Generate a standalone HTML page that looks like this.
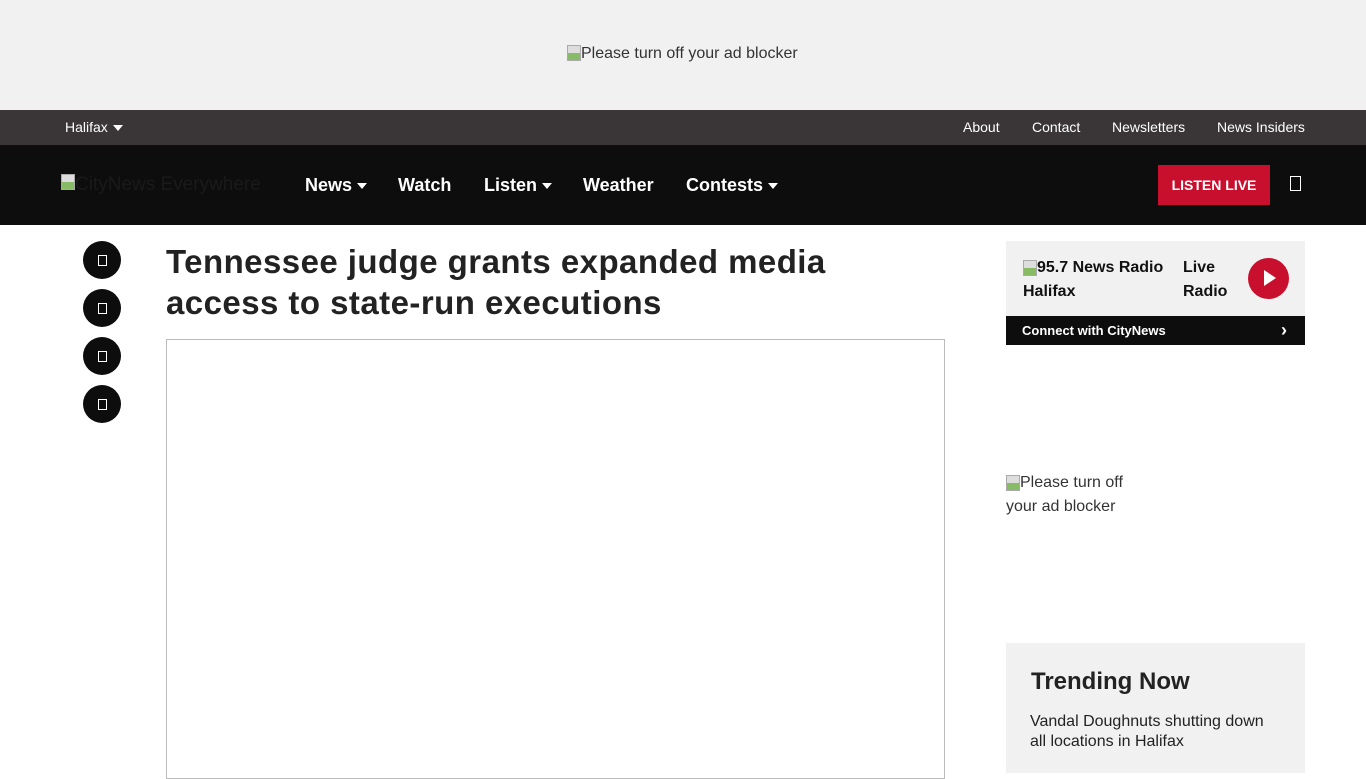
<!DOCTYPE html>
<html><head><meta charset="utf-8"><style>
*{margin:0;padding:0;box-sizing:border-box}
body{width:1366px;height:768px;overflow:hidden;background:#fff;font-family:"Liberation Sans",Arial,sans-serif;color:#222;position:relative}
.a{position:absolute}
.tri{display:inline-block;width:0;height:0;border-left:5px solid transparent;border-right:5px solid transparent;border-top:6px solid #fff;vertical-align:middle;margin-left:5px}
.nav span{position:absolute;top:175px;color:#fff;font-weight:bold;font-size:18px}
.c{position:absolute;left:83px;width:38px;height:38px;border-radius:50%;background:#0d0d0d}
.c:after{content:"";position:absolute;left:15px;top:14px;width:7px;height:9px;border:1px solid #fff}
.bi{display:inline-block;width:14px;height:16px;background:linear-gradient(#ddd 50%,#8b6 50%);vertical-align:top;border:1px solid #aaa}
</style></head><body>
<div class="a" style="left:0;top:0;width:1366px;height:110px;background:#f1f1f1"></div>
<div class="a" style="left:567px;top:45px;font-size:16px;color:#333"><span class="bi"></span>Please turn off your ad blocker</div>
<div class="a" style="left:0;top:110px;width:1366px;height:35px;background:#3a3637"></div>
<div class="a" style="left:65px;top:119px;color:#fff;font-size:14px">Halifax<span class="tri"></span></div>
<div class="a" style="left:963px;top:119px;color:#fff;font-size:14px">About</div>
<div class="a" style="left:1032px;top:119px;color:#fff;font-size:14px">Contact</div>
<div class="a" style="left:1112px;top:119px;color:#fff;font-size:14px">Newsletters</div>
<div class="a" style="left:1217px;top:119px;color:#fff;font-size:14px">News Insiders</div>
<div class="a" style="left:0;top:145px;width:1366px;height:80px;background:#0d0d0d"></div>
<div class="a" style="left:61px;top:174px;font-size:19px;color:#1a1a1a"><span class="bi"></span>CityNews Everywhere</div>
<div class="nav">
<span style="left:305px">News<i class="tri"></i></span>
<span style="left:398px">Watch</span>
<span style="left:484px">Listen<i class="tri"></i></span>
<span style="left:583px">Weather</span>
<span style="left:686px">Contests<i class="tri"></i></span>
</div>
<div class="a" style="left:1158px;top:165px;width:112px;height:40px;background:#c8102e;color:#fff;font-weight:bold;font-size:14px;text-align:center;line-height:40px">LISTEN LIVE</div>
<div class="a" style="left:1290px;top:176px;width:11px;height:15px;border:1px solid #fff"></div>
<div class="c" style="top:241px"></div><div class="c" style="top:289px"></div><div class="c" style="top:337px"></div><div class="c" style="top:385px"></div>
<div class="a" style="left:166px;top:241px;width:760px;font-size:33px;letter-spacing:0.45px;font-weight:bold;line-height:41px;color:#222">Tennessee judge grants expanded media access to state-run executions</div>
<div class="a" style="left:166px;top:339px;width:779px;height:440px;border:1px solid #bbb"></div>
<div class="a" style="left:1006px;top:241px;width:299px;height:75px;background:#f1f1f1"></div>
<div class="a" style="left:1023px;top:256px;font-size:16px;font-weight:bold;line-height:24px;color:#111;width:155px"><span class="bi" style="margin-top:4px"></span>95.7 News Radio Halifax</div>
<div class="a" style="left:1183px;top:256px;font-size:16px;font-weight:bold;line-height:24px;color:#111">Live<br>Radio</div>
<div class="a" style="left:1248px;top:258px;width:41px;height:41px;border-radius:50%;background:#c8102e"><div style="position:absolute;left:16px;top:12px;border-left:12px solid #fff;border-top:8px solid transparent;border-bottom:8px solid transparent"></div></div>
<div class="a" style="left:1006px;top:316px;width:299px;height:29px;background:#0d0d0d;color:#fff;font-weight:bold;font-size:13px;line-height:29px;padding-left:16px">Connect with CityNews<span style="position:absolute;right:18px;font-size:18px">›</span></div>
<div class="a" style="left:1006px;top:471px;font-size:16px;line-height:24px;color:#333;width:135px"><span class="bi" style="margin-top:4px"></span>Please turn off your ad blocker</div>
<div class="a" style="left:1006px;top:643px;width:299px;height:130px;background:#f1f1f1"></div>
<div class="a" style="left:1031px;top:668px;font-size:24px;font-weight:bold;color:#222">Trending Now</div>
<div class="a" style="left:1030px;top:712px;font-size:16px;line-height:20px;color:#222;width:250px">Vandal Doughnuts shutting down all locations in Halifax</div>
</body></html>
